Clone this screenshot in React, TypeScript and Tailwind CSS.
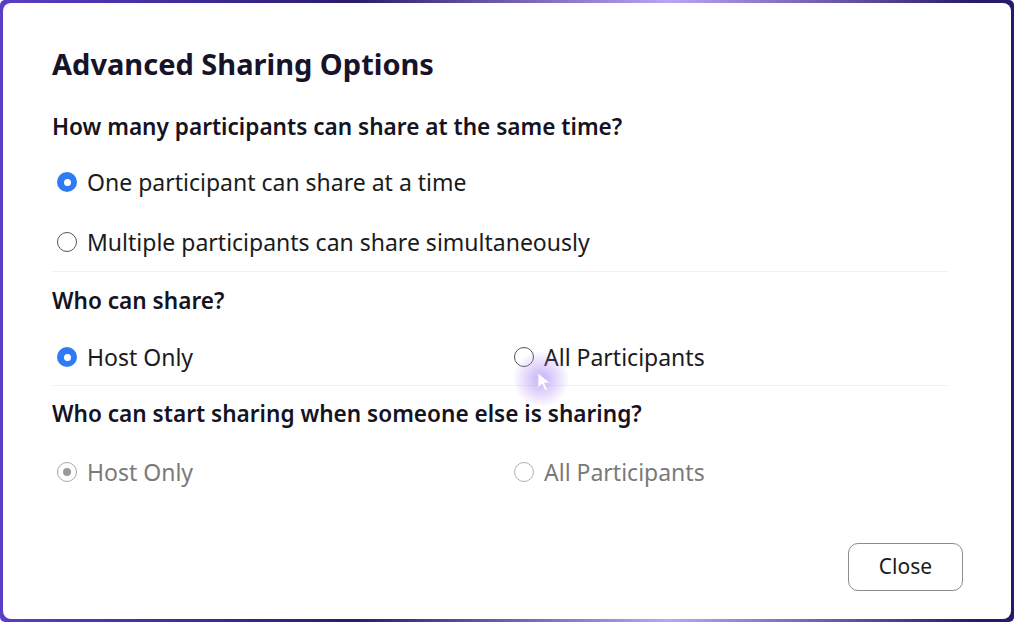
import React from 'react';

type RadioProps = { checked?: boolean; disabled?: boolean };

const Radio = ({ checked, disabled }: RadioProps) => {
  if (checked && !disabled) {
    return (
      <span className="flex h-[20px] w-[20px] shrink-0 items-center justify-center rounded-full bg-[#2f7bf5]">
        <span className="h-[7px] w-[7px] rounded-full bg-white" />
      </span>
    );
  }
  if (checked && disabled) {
    return (
      <span className="flex h-[20px] w-[20px] shrink-0 items-center justify-center rounded-full border border-[#a8a8a8] bg-white">
        <span className="h-[8px] w-[8px] rounded-full bg-[#9a9a9a]" />
      </span>
    );
  }
  return (
    <span
      className={`h-[20px] w-[20px] shrink-0 rounded-full border bg-white ${
        disabled ? 'border-[#b0b0b0]' : 'border-[#555555]'
      }`}
    />
  );
};

const Option = ({ label, checked, disabled }: RadioProps & { label: string }) => (
  <div className="flex h-[40px] items-center gap-[10px]">
    <Radio checked={checked} disabled={disabled} />
    <span className={`text-[23px] ${disabled ? 'text-[#7a7a7a]' : 'text-[#1b1b1b]'}`}>{label}</span>
  </div>
);

const Question = ({ children, className = '' }: { children: React.ReactNode; className?: string }) => (
  <h2 className={`h-[32px] text-[22.6px] font-semibold leading-[32px] text-[#141322] ${className}`}>{children}</h2>
);

const App = () => (
  <div
    className="flex h-[622px] w-[1014px] rounded-[5px] p-[3px]"
    style={{ fontFamily: '"Noto Sans", "Open Sans", sans-serif' }}
  >
    <div className="absolute inset-0 -z-10 h-[622px] w-[1014px] rounded-[5px] bg-[linear-gradient(90deg,#5a3ec8_0%,#2c1a6c_35%,#b9a5f8_66%,#2a1868_96%)]" />
    <div className="relative flex flex-1 flex-col rounded-[8px] bg-white pl-[49px] pr-[48px] pt-[41px] pb-[28px]">
      <h1 className="h-[40px] text-[29px] font-bold leading-[40px] text-[#16132a]">Advanced Sharing Options</h1>

      <Question className="mt-[27px]">How many participants can share at the same time?</Question>
      <div className="mt-[19px] flex flex-col gap-[20px] pl-[5px]">
        <Option label="One participant can share at a time" checked />
        <Option label="Multiple participants can share simultaneously" />
      </div>
      <div className="mr-[15px] mt-[9px] h-px bg-[#f1f1f3]" />

      <Question className="mt-[13px]">Who can share?</Question>
      <div className="mt-[20px] grid grid-cols-[457px_1fr] pl-[5px]">
        <Option label="Host Only" checked />
        <Option label="All Participants" />
      </div>
      <div className="mr-[15px] mt-[8px] h-px bg-[#f1f1f3]" />

      <Question className="mt-[12px]">Who can start sharing when someone else is sharing?</Question>
      <div className="mt-[22px] grid grid-cols-[457px_1fr] pl-[5px]">
        <Option label="Host Only" checked disabled />
        <Option label="All Participants" disabled />
      </div>

      <div className="mt-auto flex justify-end">
        <button className="h-[48px] w-[115px] rounded-[10px] border border-[#8c8c8c] bg-white text-[21px] text-[#1b1b1b]">
          Close
        </button>
      </div>

      <div className="pointer-events-none absolute left-[510px] top-[348px] h-[56px] w-[56px] rounded-full bg-[radial-gradient(circle,rgba(150,110,240,0.55)_0%,rgba(170,130,245,0.25)_45%,rgba(255,255,255,0)_72%)]" />
      <svg
        className="pointer-events-none absolute left-[534px] top-[369px]"
        width="14"
        height="20"
        viewBox="0 0 14 20"
      >
        <path d="M1 1 L1 16 L5 12 L8 19 L10.5 18 L7.5 11 L13 11 Z" fill="#ffffff" stroke="#d9cdfb" strokeWidth="1" />
      </svg>
    </div>
  </div>
);

export default App;
